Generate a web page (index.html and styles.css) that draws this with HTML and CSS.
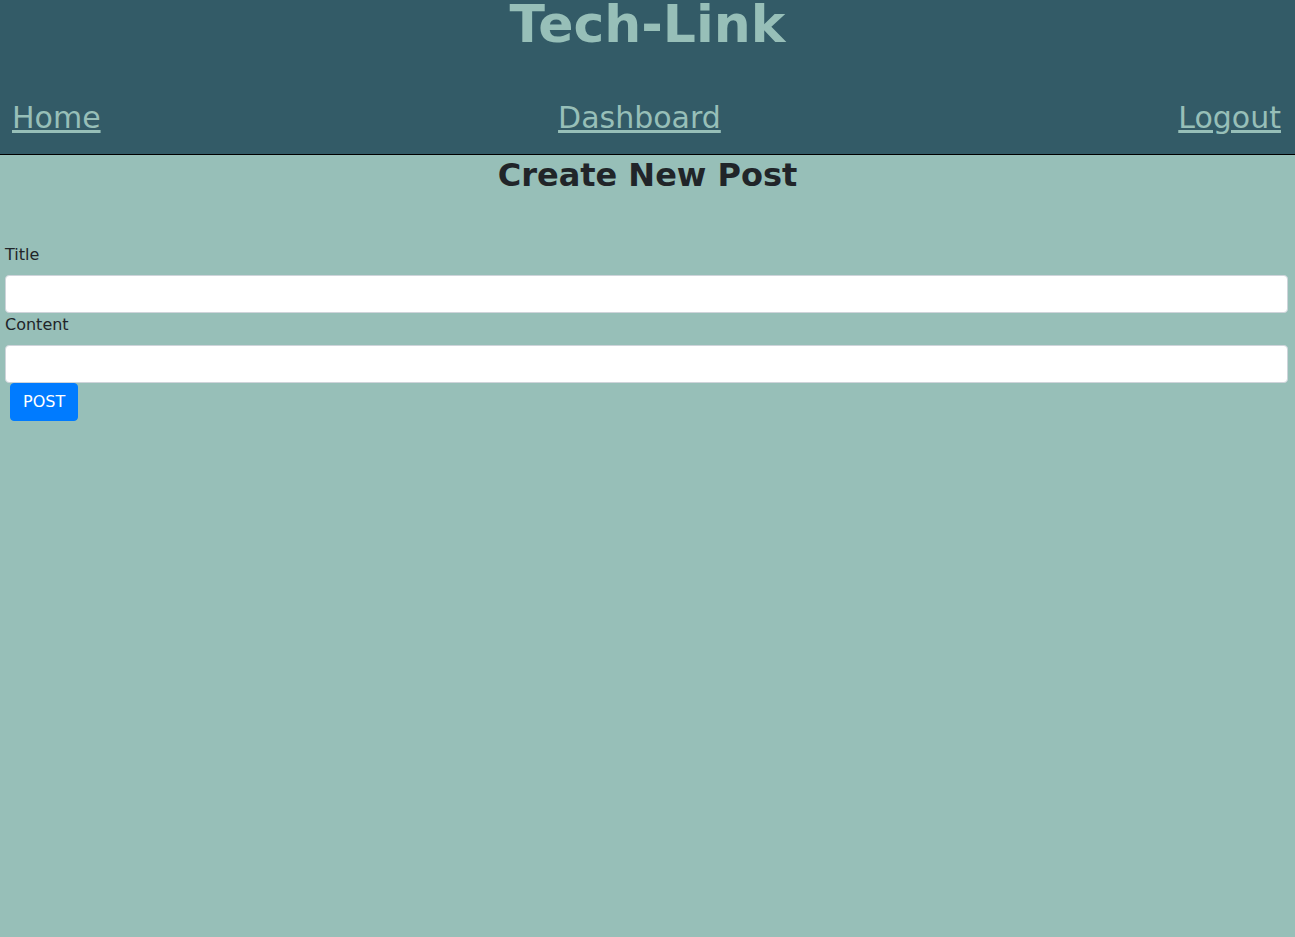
FILE: index.html
```html
<!DOCTYPE html>
<html lang="en">
<head>
<meta charset="utf-8">
<title>Tech-Link</title>
<link rel="stylesheet" href="styles.css">
</head>
<body>
<header class="site-header">
  <h1 class="brand">Tech-Link</h1>
  <nav class="nav">
    <a href="#" class="nav-link">Home</a>
    <a href="#" class="nav-link">Dashboard</a>
    <a href="#" class="nav-link">Logout</a>
  </nav>
</header>
<main class="main">
  <h2 class="page-title">Create New Post</h2>
  <form class="post-form">
    <div class="field">
      <label class="label" for="title">Title</label>
      <input class="control" id="title" type="text">
    </div>
    <div class="field">
      <label class="label" for="content">Content</label>
      <input class="control" id="content" type="text">
    </div>
    <button class="btn" type="button">POST</button>
  </form>
</main>
</body>
</html>
```
FILE: styles.css
```css
html, body {
  margin: 0;
  padding: 0;
}
body {
  background: #97bfb8;
  color: #212529;
  font-family: "DejaVu Sans", Verdana, sans-serif;
  font-size: 16px;
  line-height: 1.5;
  min-height: 937px;
}
.site-header {
  background: #335b67;
  border-bottom: 1px solid #000;
  height: 155px;
  box-sizing: border-box;
}
.brand {
  margin: 0;
  text-align: center;
  font-size: 52px;
  line-height: 48px;
  font-weight: bold;
  color: #97bfb8;
}
.nav {
  display: flex;
  justify-content: space-between;
  padding: 48px 14px 0 12px;
}
.nav-link {
  color: #97bfb8;
  font-size: 30px;
  line-height: 43px;
  text-decoration: underline;
}
.main {
  padding: 0;
}
.page-title {
  margin: 1px 0 8px;
  text-align: center;
  font-size: 32px;
  line-height: 1.2;
  font-weight: bold;
  color: #212529;
}
.post-form {
  padding: 41px 7px 0 5px;
}
.field {
  display: flex;
  flex-direction: column;
}
.label {
  display: block;
  margin-bottom: 8px;
}
.control {
  display: block;
  width: 100%;
  height: 38px;
  box-sizing: border-box;
  padding: 6px 12px;
  font-size: 16px;
  font-family: inherit;
  background: #fff;
  border: 1px solid #ced4da;
  border-radius: 4px;
}
.btn {
  margin-left: 5px;
  height: 38px;
  padding: 6px 12px;
  font-family: inherit;
  font-size: 16px;
  line-height: 1.5;
  color: #fff;
  background: #007bff;
  border: 1px solid #007bff;
  border-radius: 4px;
}
```
